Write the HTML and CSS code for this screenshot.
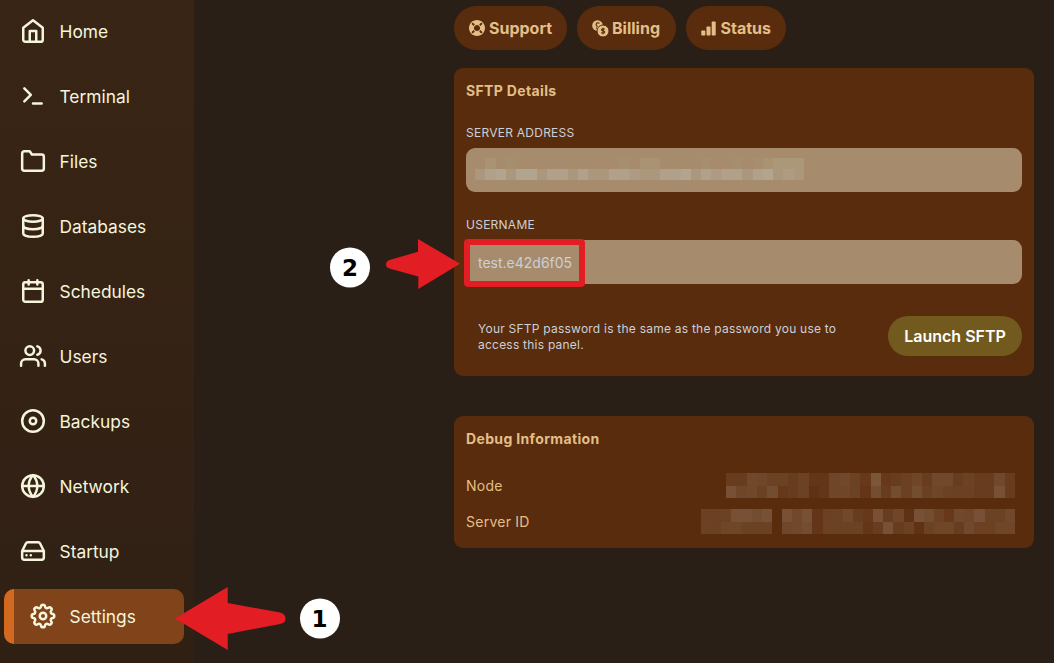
FILE: index.html
```html
<!DOCTYPE html>
<html lang="en">
<head>
<meta charset="utf-8">
<title>Server Settings</title>
<link rel="stylesheet" href="styles.css">
</head>
<body>
<div class="app">
  <nav class="sidebar">
    <a class="item"><svg class="icon" viewBox="0 0 24 24"><path d="M3 9l9-7 9 7v11a2 2 0 0 1-2 2H5a2 2 0 0 1-2-2z"/><path d="M9 22V12h6v10"/></svg><span>Home</span></a>
    <a class="item"><svg class="icon" viewBox="0 0 24 24"><path d="M4 17l6-6-6-6M12 19h8"/></svg><span>Terminal</span></a>
    <a class="item"><svg class="icon" viewBox="0 0 24 24"><path d="M22 19a2 2 0 0 1-2 2H4a2 2 0 0 1-2-2V5a2 2 0 0 1 2-2h5l2 3h9a2 2 0 0 1 2 2z"/></svg><span>Files</span></a>
    <a class="item"><svg class="icon" viewBox="0 0 24 24"><ellipse cx="12" cy="5" rx="9" ry="3"/><path d="M21 12c0 1.66-4 3-9 3s-9-1.34-9-3"/><path d="M3 5v14c0 1.66 4 3 9 3s9-1.34 9-3V5"/></svg><span>Databases</span></a>
    <a class="item"><svg class="icon" viewBox="0 0 24 24"><rect x="3" y="4" width="18" height="18" rx="2"/><path d="M16 2v4M8 2v4M3 10h18"/></svg><span>Schedules</span></a>
    <a class="item"><svg class="icon" viewBox="0 0 24 24"><path d="M17 21v-2a4 4 0 0 0-4-4H5a4 4 0 0 0-4 4v2"/><circle cx="9" cy="7" r="4"/><path d="M23 21v-2a4 4 0 0 0-3-3.87M16 3.13a4 4 0 0 1 0 7.75"/></svg><span>Users</span></a>
    <a class="item"><svg class="icon" viewBox="0 0 24 24"><circle cx="12" cy="12" r="10"/><circle cx="12" cy="12" r="3"/></svg><span>Backups</span></a>
    <a class="item"><svg class="icon" viewBox="0 0 24 24"><circle cx="12" cy="12" r="10"/><path d="M2 12h20M12 2a15.3 15.3 0 0 1 4 10 15.3 15.3 0 0 1-4 10 15.3 15.3 0 0 1-4-10 15.3 15.3 0 0 1 4-10z"/></svg><span>Network</span></a>
    <a class="item"><svg class="icon" viewBox="0 0 24 24"><path d="M22 12H2M5.45 5.11L2 12v6a2 2 0 0 0 2 2h16a2 2 0 0 0 2-2v-6l-3.45-6.89A2 2 0 0 0 16.76 4H7.24a2 2 0 0 0-1.79 1.11zM6 16h.01M10 16h.01"/></svg><span>Startup</span></a>
    <a class="item active"><svg class="icon" viewBox="-12 -12 24 24"><circle r="3"/><path d="M8.800-1.900A1.920 1.920 0 0 1 8.800 1.900A1.800 1.800 0 0 0 7.566 4.879A1.920 1.920 0 0 1 4.879 7.566A1.800 1.800 0 0 0 1.900 8.800A1.920 1.920 0 0 1-1.900 8.800A1.800 1.800 0 0 0-4.879 7.566A1.920 1.920 0 0 1-7.566 4.879A1.800 1.800 0 0 0-8.800 1.900A1.920 1.920 0 0 1-8.800-1.900A1.800 1.800 0 0 0-7.566-4.879A1.920 1.920 0 0 1-4.879-7.566A1.800 1.800 0 0 0-1.900-8.800A1.920 1.920 0 0 1 1.900-8.800A1.800 1.800 0 0 0 4.879-7.566A1.920 1.920 0 0 1 7.566-4.879A1.800 1.800 0 0 0 8.800-1.900z"/></svg><span>Settings</span></a>
  </nav>
  <main class="main">
    <div class="links">
      <a class="pill support"><svg width="16" height="16" viewBox="8 8 496 496"><path fill="currentColor" d="M256 8C119 8 8 119 8 256s111 248 248 248 248-111 248-248S393 8 256 8zm173.700 119.560l-63.400 63.400c-11-18.560-26.670-34.250-45.260-45.260l63.400-63.400a218.400 218.400 0 0 1 45.260 45.260zM256 352c-53 0-96-43-96-96s43-96 96-96 96 43 96 96-43 96-96 96zM127.560 82.300l63.400 63.400c-18.560 11-34.250 26.670-45.260 45.260l-63.400-63.400a218.370 218.370 0 0 1 45.260-45.260zM82.300 384.440l63.400-63.400c11 18.560 26.670 34.250 45.260 45.260l-63.400 63.400a218.400 218.400 0 0 1-45.260-45.260zm302.140 45.260l-63.400-63.400c18.560-11 34.250-26.670 45.260-45.260l63.400 63.400a218.400 218.400 0 0 1-45.260 45.260z"/></svg>Support</a>
      <a class="pill billing"><svg width="17" height="17" viewBox="0 0 17 17"><circle cx="5.500" cy="5.500" r="5.300" fill="currentColor"/><path class="coin-mark" d="M7.600 3.300C6 2.300 4.300 3 4.100 4.300c-.2 1.500 1.300 1.200 1.200 2.500M3.800 7.700l1.100.5"/><circle class="coin" cx="11" cy="11" r="6"/><path class="coin-mark" d="M12.800 9.300c-.8-.7-3.200-.8-3.300.5-.1 1.500 3.200.8 3.100 2.400-.1 1.300-2.400 1.200-3.400.4M11 7.800v6.400"/></svg>Billing</a>
      <a class="pill status"><svg width="15" height="15" viewBox="0 0 15 15"><g fill="currentColor"><rect x=".3" y="9.500" width="4" height="5" rx=".8"/><rect x="5.500" y="5.500" width="4" height="9" rx=".8"/><rect x="10.700" y=".5" width="4" height="14" rx=".8"/></g></svg>Status</a>
    </div>
    <section class="card sftp">
      <h2>SFTP Details</h2>
      <label>Server Address</label>
      <div class="field"><svg class="mosaic" id="address" width="330" height="22"></svg></div>
      <label>Username</label>
      <div class="field">test.e42d6f05<div class="highlight"></div></div>
      <div class="launch">
        <p>Your SFTP password is the same as the password you use to access this panel.</p>
        <button>Launch SFTP</button>
      </div>
    </section>
    <section class="card debug">
      <h2>Debug Information</h2>
      <div class="row"><span>Node</span><svg class="mosaic" id="node" width="289" height="25"></svg></div>
      <div class="row"><span>Server ID</span><svg class="mosaic" id="server" width="314" height="25"></svg></div>
    </section>
  </main>
  <svg class="callouts" viewBox="0 0 1054 663">
    <path fill="#e31d24" d="M175 618.500L227.700 587V603L280 612.500Q285.500 614 285.500 618.500T280 624L227.700 634V650z"/>
    <path fill="#e31d24" d="M460 263.700L418 239V251.800L389.500 260Q386 261.500 386 264.500T389.500 268.500L418.300 276.500V289z"/>
    <circle cx="320" cy="618.500" r="20" fill="#fff"/><text x="319.500" y="627">1</text>
    <circle cx="350" cy="267.500" r="20" fill="#fff"/><text x="350" y="276">2</text>
  </svg>
</div>
<script src="mosaic.js"></script>
</body>
</html>
```
FILE: styles.css
```css
* { box-sizing: border-box; }
body { margin: 0; background: #2a1f16; font-family: Inter, "Liberation Sans", sans-serif; }
.app { position: relative; display: flex; width: 1054px; height: 663px; overflow: hidden; }
.sidebar { width: 194px; flex: none; padding: 4px 10px 0 4px; display: flex; flex-direction: column; gap: 10px; background: linear-gradient(#392515, #302014); }
.item { display: flex; align-items: center; gap: 14px; height: 55px; flex: none; padding: 0 15.500px; border-radius: 10px; color: #f5f5dc; font-size: 17.350px; }
.item.active { background: #80431a; border-left: 10px solid #d2691e; }
.icon { width: 26px; height: 26px; margin-bottom: 1px; flex: none; overflow: visible; fill: none; stroke: currentColor; stroke-width: 2.300; stroke-linecap: round; stroke-linejoin: round; }
.main { flex: 1; padding: 6px 20px 0 260px; }
.links { display: flex; gap: 10px; margin-bottom: 18px; }
.pill { height: 44px; display: flex; align-items: center; gap: 4px; padding-left: 15px; border-radius: 22px; background: #592c0d; color: #e3bf87; font-size: 16px; font-weight: 700; }
.support { width: 113px; }
.billing { width: 99px; gap: 3px; }
.status { width: 100px; gap: 4.500px; }
.coin { fill: currentColor; stroke: #592c0d; stroke-width: 1; }
.coin-mark { fill: none; stroke: #592c0d; stroke-width: 1.200; }
.card { width: 580px; background: #592c0d; border-radius: 9px; padding: 12px; color: #e3bf87; }
.sftp { height: 308px; margin-bottom: 40px; }
.debug { height: 132px; }
h2 { margin: 0; font-size: 14px; line-height: 22px; font-weight: 700; letter-spacing: .35px; }
label { display: block; margin-top: 25px; height: 23px; line-height: 16px; font-size: 12px; letter-spacing: .25px; text-transform: uppercase; color: #cbd0d8; }
h2 + label { margin-top: 22px; height: 24px; padding-top: 1px; }
.field { position: relative; height: 44px; display: flex; align-items: center; padding: 0 9px 0 12px; border-radius: 9px; background: #a68b6c; color: #cbd0d8; font-size: 14px; }
.field .mosaic { margin: -3px 0 0 -3px; }
.highlight { position: absolute; left: -2px; top: -1px; width: 121px; height: 48px; border: 6px solid #e31d24; border-radius: 4px; }
.launch { display: flex; justify-content: space-between; align-items: center; height: 40px; margin-top: 32px; padding-left: 12px; }
p { margin: 2px 0 0; width: 375px; font-size: 12px; line-height: 16px; letter-spacing: .23px; color: #cbd0d8; }
button { width: 134px; height: 40px; padding: 0; border: 0; border-radius: 20px; background: #725a1e; color: #fff; font: 600 16px Inter, sans-serif; }
.debug h2 { margin-bottom: 18px; }
.row { height: 36px; display: flex; align-items: center; justify-content: space-between; padding-right: 7px; font-size: 14px; letter-spacing: .25px; }
.row span { padding-bottom: 2px; }
.row .mosaic { margin-bottom: 1px; }
.callouts { position: absolute; left: 0; top: 0; width: 1054px; height: 663px; pointer-events: none; }
.callouts text { font: bold 23px "DejaVu Sans", sans-serif; text-anchor: middle; }
```
FILE: mosaic.js
```javascript
// Draws the pixelated blocks that hide private values.
// Each row holds one character per cell: a palette letter, or "." for empty.
const tones = {
  a: "#a68f6f", b: "#a99373", c: "#ab9878", d: "#ab977b", e: "#af9b82", f: "#b1a18b", g: "#b2a58f",
  A: "#5f3215", B: "#643519", C: "#67391a", D: "#683d1f", E: "#6b4023", F: "#6c4224", G: "#704628", H: "#71482b", I: "#734d30", J: "#775035", K: "#7c5638"
};
function draw(id, rows, width, heights) {
  const svg = document.getElementById(id);
  let y = 0;
  rows.forEach((row, r) => {
    const n = row.length;
    for (let i = 0; i < n; i++) {
      if (row[i] === ".") continue;
      const x = Math.round(i * width / n);
      const rect = document.createElementNS("http://www.w3.org/2000/svg", "rect");
      rect.setAttribute("x", x);
      rect.setAttribute("y", y);
      rect.setAttribute("width", Math.round((i + 1) * width / n) - x);
      rect.setAttribute("height", heights[r]);
      rect.setAttribute("fill", tones[row[i]]);
      svg.appendChild(rect);
    }
    y += heights[r];
  });
}
draw("address", [".b.a..........a.bb....a..a.abccc", "dfgdggdffdfddffeddffgdfeffdfgded"], 329, [11, 11]);
draw("node", ["DDHGFFDFBBGHFCKCDEGDHHDFDDHD", "JGHEICDFABGGFBIDIEIEGFEEDDJD"], 289, [13, 12]);
draw("server", ["EEFJJIJ.JHJBEFHDCJDGAJIFCHGJFFH", "FEGGFFF.GHIBFEFFBDJDFAFGGDHEEGG"], 314, [13, 12]);
```
